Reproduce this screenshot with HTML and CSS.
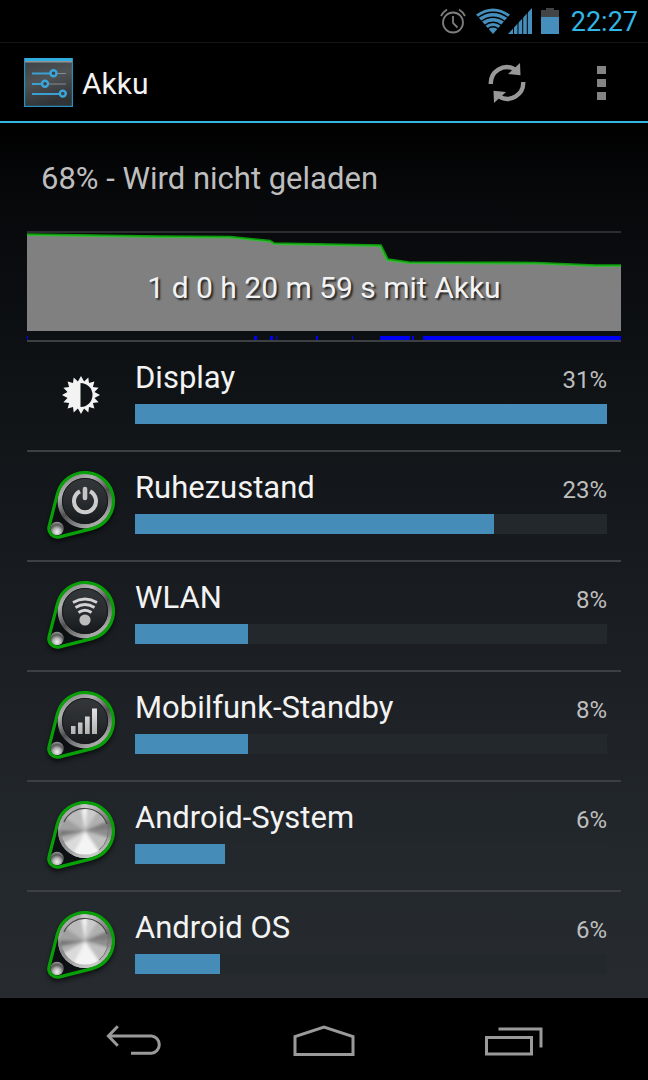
FILE: index.html
```html
<!DOCTYPE html>
<html lang="de">
<head>
<meta charset="UTF-8">
<meta name="viewport" content="width=device-width, initial-scale=1">
<title>Akku</title>
<link rel="stylesheet" href="styles.css">
</head>
<body>
<!-- shared icon parts -->
<svg class="defs" width="0" height="0" aria-hidden="true">
  <defs>
    <linearGradient id="rim" x1="0" y1="0" x2="0.6" y2="1">
      <stop offset="0" stop-color="#7c7c7c"/>
      <stop offset="0.3" stop-color="#b0b0b0"/>
      <stop offset="0.62" stop-color="#505050"/>
      <stop offset="1" stop-color="#a8a8a8"/>
    </linearGradient>
    <linearGradient id="dark" x1="0" y1="0" x2="0" y2="1">
      <stop offset="0" stop-color="#34383b"/>
      <stop offset="0.5" stop-color="#292d30"/>
      <stop offset="1" stop-color="#14171a"/>
    </linearGradient>
    <radialGradient id="ball" cx="0.5" cy="0.75" r="0.7">
      <stop offset="0" stop-color="#f0f0f0"/>
      <stop offset="0.4" stop-color="#b4b4b4"/>
      <stop offset="0.75" stop-color="#555"/>
      <stop offset="1" stop-color="#909090"/>
    </radialGradient>
    <linearGradient id="glyph" x1="0" y1="0" x2="0" y2="1">
      <stop offset="0" stop-color="#e4e4e4"/>
      <stop offset="1" stop-color="#b2b2b2"/>
    </linearGradient>
    <filter id="soft" x="-20%" y="-20%" width="140%" height="140%"><feGaussianBlur stdDeviation="1.6"/></filter>
    <filter id="shade" x="-20%" y="-20%" width="140%" height="140%"><feGaussianBlur stdDeviation="2.4"/></filter>
    <clipPath id="face"><circle cx="46" cy="38" r="27"/></clipPath>
    <path id="drop" d="M18.4 30.9A28.5 28.5 0 1 1 53.1 65.6L20.7 73.9A8.7 8.7 0 0 1 10.1 63.3Z"/>

    <symbol id="pin" viewBox="0 0 84 84">
      <use href="#drop" y="3" fill="#000" stroke="#000" stroke-width="3" opacity="0.6" filter="url(#shade)"/>
      <use href="#drop" fill="#0d1013"/>
      <circle cx="18" cy="65.5" r="6.8" fill="url(#ball)"/>
    </symbol>

    <symbol id="pin-dark" viewBox="0 0 84 84">
      <use href="#pin" width="84" height="84"/>
      <circle cx="46" cy="38" r="25.2" fill="url(#dark)" stroke="url(#rim)" stroke-width="4.4"/>
      <circle cx="46" cy="38" r="22.6" fill="none" stroke="#15181a" stroke-width="1"/>
      <use href="#drop" fill="none" stroke="#07a007" stroke-width="3.2"/>
    </symbol>

    <symbol id="pin-metal" viewBox="0 0 84 84">
      <use href="#pin" width="84" height="84"/>
      <g clip-path="url(#face)">
        <circle cx="46" cy="38" r="28" fill="#9a9a9a"/>
        <g filter="url(#soft)">
          <path fill="#f0f0f0" d="M46 38 40 4H50Z"/>
          <path fill="#cacaca" d="M46 38 50 4 66 8Z"/>
          <path fill="#b0b0b0" d="M46 38 66 8 82 22Z"/>
          <path fill="#7c7c7c" d="M46 38 82 22V36Z"/>
          <path fill="#8e8e8e" d="M46 38 82 36V48Z"/>
          <path fill="#c0c0c0" d="M46 38 82 48 70 72Z"/>
          <path fill="#f4f4f4" d="M46 38 70 72H28Z"/>
          <path fill="#dadada" d="M46 38 28 72 10 58Z"/>
          <path fill="#b0b0b0" d="M46 38 10 58V46Z"/>
          <path fill="#747474" d="M46 38 10 46V37Z"/>
          <path fill="#a0a0a0" d="M46 38 10 37 16 18Z"/>
          <path fill="#bababa" d="M46 38 16 18 40 4Z"/>
        </g>
        <circle cx="46" cy="38" r="25.4" fill="none" stroke="url(#rim)" stroke-width="3.6" opacity="0.55"/>
      </g>
      <path d="M25 29A23.2 23.2 0 0 1 68 31" fill="none" stroke="#484848" stroke-width="1.2"/>
      <path d="M68 31A23.4 23.4 0 0 1 60 57" fill="none" stroke="#777" stroke-width="1"/>
      <use href="#drop" fill="none" stroke="#07a007" stroke-width="3.2"/>
    </symbol>
  </defs>
</svg>

<header class="status-bar">
  <svg class="status-alarm" width="26" height="26" viewBox="0 0 26 26" fill="none" stroke="#7d7d7d" stroke-width="1.8">
    <circle cx="13" cy="14.5" r="10"/>
    <path d="M13 8V15L17.5 19.5M1 8Q3 4 7 1.5M25 8Q23 4 19 1.5"/>
  </svg>
  <svg class="status-signal" width="56" height="26" viewBox="0 0 56 26">
    <path fill="#468ebb" d="M0 6.5Q17-5.5 34 6.5L17 26Z"/>
    <path fill="none" stroke="#000" stroke-width="1.3" d="M2 9.5Q17-1 32 9.5M5 13.5Q17 5 29 13.5M8.5 17.5Q17 11 25.5 17.5M11.5 21Q17 16.5 22.5 21"/>
    <path fill="#468ebb" d="M56 0V26H32Z"/>
    <path stroke="#000" stroke-width="1" d="M37.5 14V26M42 10V26M46.7 6V26M51.3 2V26"/>
  </svg>
  <svg class="status-battery" width="18" height="26" viewBox="0 0 18 26">
    <path fill="#424446" d="M0 2H5V0H13V2H18V10H0Z"/>
    <path fill="#468ebb" d="M0 9H18V26H0Z"/>
  </svg>
  <time class="clock">22:27</time>
</header>

<div class="action-bar">
  <svg class="app-icon" width="49" height="49" viewBox="0 0 49 49">
    <defs>
      <linearGradient id="app" x1="0" y1="0" x2="0.3" y2="1">
        <stop offset="0" stop-color="#3b3f42"/>
        <stop offset="0.5" stop-color="#505355"/>
        <stop offset="1" stop-color="#303437"/>
      </linearGradient>
    </defs>
    <rect x="0.6" y="0.6" width="47.8" height="47.8" fill="url(#app)" stroke="#2a8dbd" stroke-width="1.2"/>
    <path fill="#31aee0" d="M1 0H48V3H1Z"/>
    <path fill="#8f9698" d="M1 3H48V4.4H1Z"/>
    <path stroke="#858a8c" stroke-width="1" d="M8 15.5H42M8 26H42M8 36H42"/>
    <path stroke="#3c9fd4" stroke-width="1.8" d="M8 15.5H27M8 26H19M8 36H36"/>
    <g fill="#3c4246" stroke="#3aa7dc" stroke-width="2.4">
      <circle cx="29.5" cy="15.3" r="3"/>
      <circle cx="21" cy="25.8" r="3"/>
      <circle cx="38.8" cy="35.6" r="3"/>
    </g>
  </svg>
  <h1 class="title">Akku</h1>
  <button class="action-btn" type="button" aria-label="Aktualisieren">
    <svg width="38" height="40" viewBox="0 0 38 40">
      <g id="arrow">
        <path fill="none" stroke="#989898" stroke-width="4.4" d="M2.8 21A16 16 0 0 1 26.5 6.2"/>
        <path fill="#989898" d="M32 0 32.5 12.2 20 11Z"/>
      </g>
      <use href="#arrow" transform="rotate(180 19 20)"/>
    </svg>
  </button>
  <button class="action-btn" type="button" aria-label="Weitere Optionen">
    <svg width="9" height="34" viewBox="0 0 9 34" fill="#848484">
      <path d="M0 0H9V8H0ZM0 13H9V21H0ZM0 26H9V34H0Z"/>
    </svg>
  </button>
</div>

<main class="content">
  <p class="battery-status">68% - Wird nicht geladen</p>

  <div class="history">
    <svg class="chart" viewBox="0 0 594 107" preserveAspectRatio="none">
      <path fill="#808080" d="M0 1 130 3 203 3.5 228 6 243 7.5 247 10 300 11 353 12 360 26 382 29 509 29.5 568 32 594 32V98H0Z"/>
      <path fill="none" stroke="#35b835" stroke-width="2" d="M0 2 130 4 203 4.5 228 7 243 8.5 247 11 300 12 353 13 360 27 382 30 509 30.5 568 33H594"/>
      <path fill="none" stroke="#0c9a0c" stroke-width="1.6" d="M0 1 130 3 203 3.5 228 6 243 7.5 247 10 300 11 354 12 361 26 382 29 509 29.5 568 32H594"/>
      <path fill="#0000f5" d="M0 103H1V107H0ZM227 103H230V107H227ZM243 103H246V107H243ZM249 103H250V107H249ZM289 103H291V107H289ZM325 103H326V107H325ZM353 103H383V107H353ZM385 103H387V107H385ZM396 103H594V107H396Z"/>
    </svg>
    <p class="chart-label">1 d 0 h 20 m 59 s mit Akku</p>
  </div>

  <ul class="usage-list">
    <li class="usage">
      <svg class="usage-icon" viewBox="0 0 84 84">
        <path fill="#f3f3f3" d="M42 23 45.1 28.5 49.3 24.4 50 30.1 55.4 28.6 53.9 34 59.6 34.7 55.5 38.9 61 42 55.5 45.1 59.6 49.3 53.9 50 55.4 55.4 50 53.9 49.3 59.6 45.1 55.5 42 61 38.9 55.5 34.7 59.6 34 53.9 28.6 55.4 30.1 50 24.4 49.3 28.5 45.1 23 42 28.5 38.9 24.4 34.7 30.1 34 28.6 28.6 34 30.1 34.7 24.4 38.9 28.5Z"/>
        <path fill="#101417" d="M41.5 30A12 12 0 0 1 41.5 54Z"/>
      </svg>
      <div class="usage-body">
        <div class="usage-head"><span class="name">Display</span><span class="percent">31%</span></div>
        <div class="track"><div class="fill" style="width: 100%"></div></div>
      </div>
    </li>
    <li class="usage">
      <svg class="usage-icon" viewBox="0 0 84 84">
        <use href="#pin-dark" width="84" height="84"/>
        <path fill="none" stroke="#cdcdcd" stroke-width="4" d="M41 28.4A11 11 0 1 0 51 28.4"/>
        <path stroke="#c4c4c4" stroke-width="4.6" stroke-linecap="round" d="M46 26V35"/>
      </svg>
      <div class="usage-body">
        <div class="usage-head"><span class="name">Ruhezustand</span><span class="percent">23%</span></div>
        <div class="track"><div class="fill" style="width: 76%"></div></div>
      </div>
    </li>
    <li class="usage">
      <svg class="usage-icon" viewBox="0 0 84 84">
        <use href="#pin-dark" width="84" height="84"/>
        <path fill="none" stroke="#d4d4d4" stroke-width="2.8" d="M34 29.5Q46 22.5 58 29.5M36.5 34.5Q46 28.5 55.5 34.5M39.5 39.5Q46 35 52.5 39.5"/>
        <circle cx="46" cy="47" r="5.6" fill="#bcbcbc"/>
      </svg>
      <div class="usage-body">
        <div class="usage-head"><span class="name">WLAN</span><span class="percent">8%</span></div>
        <div class="track"><div class="fill" style="width: 24%"></div></div>
      </div>
    </li>
    <li class="usage">
      <svg class="usage-icon" viewBox="0 0 84 84">
        <use href="#pin-dark" width="84" height="84"/>
        <path fill="url(#glyph)" d="M32 43H36.5V51H32ZM39 39.5H43.5V51H39ZM46 33.5H50.7V51H46ZM53 25.5H58V51H53Z"/>
      </svg>
      <div class="usage-body">
        <div class="usage-head"><span class="name">Mobilfunk-Standby</span><span class="percent">8%</span></div>
        <div class="track"><div class="fill" style="width: 24%"></div></div>
      </div>
    </li>
    <li class="usage">
      <svg class="usage-icon" viewBox="0 0 84 84"><use href="#pin-metal" width="84" height="84"/></svg>
      <div class="usage-body">
        <div class="usage-head"><span class="name">Android-System</span><span class="percent">6%</span></div>
        <div class="track"><div class="fill" style="width: 19%"></div></div>
      </div>
    </li>
    <li class="usage">
      <svg class="usage-icon" viewBox="0 0 84 84"><use href="#pin-metal" width="84" height="84"/></svg>
      <div class="usage-body">
        <div class="usage-head"><span class="name">Android OS</span><span class="percent">6%</span></div>
        <div class="track"><div class="fill" style="width: 18%"></div></div>
      </div>
    </li>
  </ul>
</main>

<nav class="nav-bar">
  <button class="nav-btn" type="button" aria-label="Zurück">
    <svg width="56" height="32" viewBox="0 0 56 32" fill="none" stroke="#9a9a9a" stroke-width="3">
      <path d="M3 11H45.5A8.7 8.7 0 0 1 45.5 28.3H25"/>
      <path d="M11.8 1.2 2.4 11 11.8 20.8"/>
    </svg>
  </button>
  <button class="nav-btn" type="button" aria-label="Startseite">
    <svg width="62" height="32" viewBox="0 0 62 32" fill="none" stroke="#9a9a9a" stroke-width="3">
      <path d="M2 29.5V11.5L31 2 60 11.5V29.5Z"/>
    </svg>
  </button>
  <button class="nav-btn" type="button" aria-label="Letzte Apps">
    <svg width="58" height="32" viewBox="0 0 58 32" fill="none" stroke="#9a9a9a" stroke-width="3">
      <path d="M1.5 12.5H46.5V29H1.5ZM13.5 4H56V22.5"/>
    </svg>
  </button>
</nav>
</body>
</html>
```

FILE: styles.css
```css
:root {
  --holo-blue: #33b5e5;
  --bar-blue: #468cb8;
  --text-primary: #f3f3f3;
  --text-secondary: #bebebe;
  --divider: #3c4042;
  --track: #23282c;
}

* {
  box-sizing: border-box;
  margin: 0;
  padding: 0;
}

body {
  display: flex;
  flex-direction: column;
  height: 100vh;
  font-family: Roboto, "Noto Sans", sans-serif;
  background: #000;
  color: var(--text-primary);
}

svg {
  display: block;
  flex-shrink: 0;
}

button {
  display: flex;
  align-items: center;
  justify-content: center;
  background: none;
  border: none;
  cursor: pointer;
}

.defs {
  position: absolute;
}

/* Status bar */
.status-bar {
  display: flex;
  align-items: center;
  justify-content: flex-end;
  flex-shrink: 0;
  height: 43px;
  padding-right: 10px;
  border-bottom: 1px solid #141414;
}

.status-alarm {
  margin-right: 10px;
}

.status-signal {
  margin-right: 9px;
}

.status-battery {
  margin-right: 12px;
}

.clock {
  padding-top: 2px;
  font-size: 27px;
  line-height: 32px;
  color: var(--holo-blue);
}

/* Action bar */
.action-bar {
  display: flex;
  align-items: center;
  flex-shrink: 0;
  height: 80px;
  padding-left: 24px;
  border-bottom: 2px solid var(--holo-blue);
}

.title {
  flex: 1;
  margin-left: 9px;
  padding-top: 4px;
  font-size: 30px;
  font-weight: 400;
  line-height: 36px;
}

.action-btn {
  height: 78px;
  width: 94px;
  padding-top: 2px;
}

/* Content */
.content {
  flex: 1;
  min-height: 0;
  padding: 0 27px;
  overflow: hidden;
  background: linear-gradient(#000, #07080a 8%, #0f1316 30%, #15191d 45%, #1d2125 65%, #23282c 85%, #272b2f);
}

.battery-status {
  padding: 38px 14px 34px;
  font-size: 31px;
  line-height: 36px;
  color: var(--text-secondary);
}

.history {
  display: grid;
  border-top: 2px solid #2c2d2e;
}

.chart,
.chart-label {
  grid-area: 1 / 1;
}

.chart {
  width: 100%;
  height: 107px;
}

.chart-label {
  padding-top: 37px;
  font-size: 30px;
  line-height: 36px;
  text-align: center;
  text-shadow: 2px 2px 2px #222;
}

/* Usage list */
.usage-list {
  list-style: none;
}

.usage {
  display: flex;
  gap: 12px;
  height: 110px;
  padding: 0 14px 0 12px;
  border-top: 2px solid var(--divider);
}

.usage-icon {
  width: 84px;
  height: 84px;
  margin-top: 11px;
}

.usage-body {
  flex: 1;
  padding-top: 18px;
}

.usage-head {
  display: flex;
  align-items: baseline;
  justify-content: space-between;
  height: 36px;
  margin-bottom: 8px;
  line-height: 36px;
}

.name {
  font-size: 31px;
}

.percent {
  font-size: 24px;
  color: var(--text-secondary);
}

.track {
  height: 20px;
  background: var(--track);
}

.fill {
  height: 100%;
  background: var(--bar-blue);
}

/* Navigation bar */
.nav-bar {
  display: flex;
  justify-content: center;
  flex-shrink: 0;
  height: 82px;
  background: #000;
}

.nav-btn {
  width: 190px;
  padding-top: 4px;
}
```
